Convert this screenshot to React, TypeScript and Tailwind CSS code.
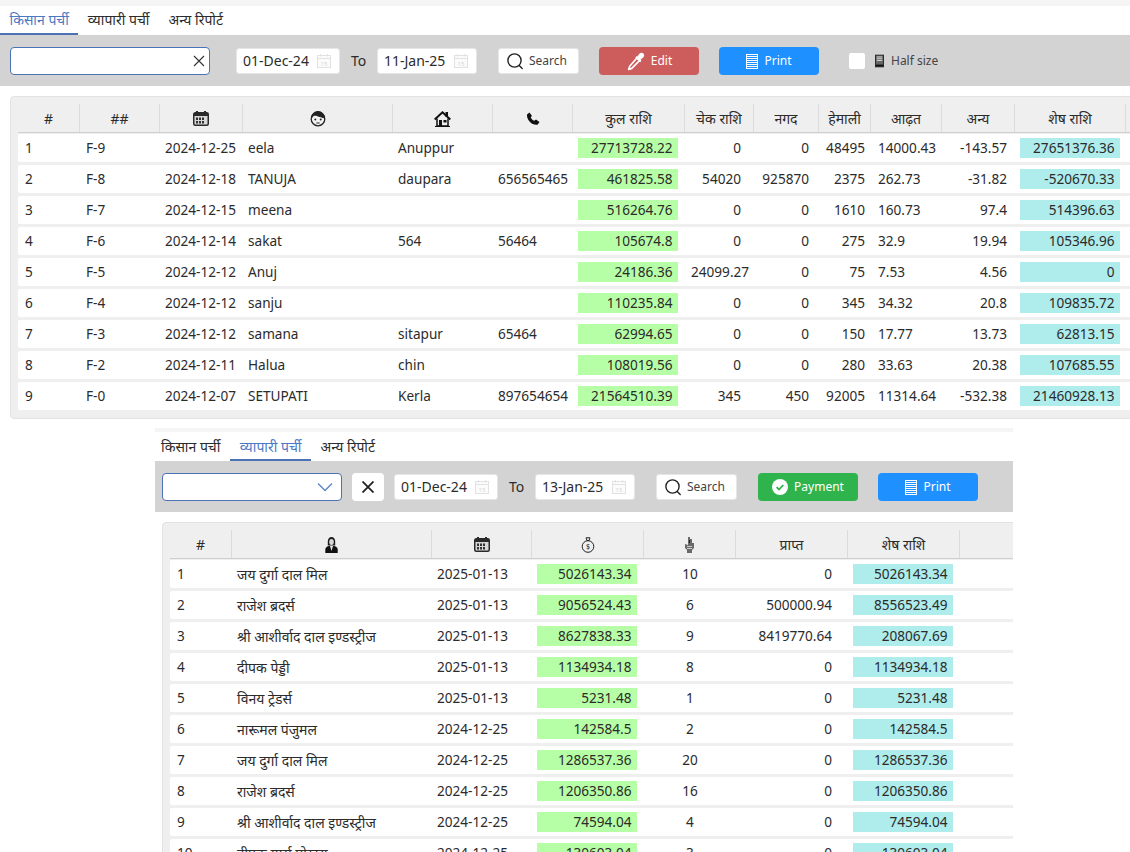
const font = "[font-family:'Noto_Sans','Open_Sans',sans-serif]";

const CalendarFaint = () => (
  <svg width="14" height="14" viewBox="0 0 14 14" fill="none" className="text-[#e2e2e2]">
    <rect x="0.5" y="1.5" width="13" height="12" stroke="currentColor" fill="#fbfbfb" />
    <path d="M0.5 4.5h13M3.5 0v2.5M10.5 0v2.5" stroke="currentColor" />
    <text x="7" y="11.5" fontSize="6" textAnchor="middle" fill="#d6d6d6">15</text>
  </svg>
);

const SearchIcon = () => (
  <svg width="18" height="18" viewBox="0 0 18 18" fill="none" stroke="#222" strokeWidth="1.4">
    <circle cx="8.5" cy="8.5" r="6.6" />
    <path d="M13.2 13.4l3 3" strokeLinecap="round" />
  </svg>
);

const PrintIcon = () => (
  <svg width="12" height="15" viewBox="0 0 12 15" fill="none" stroke="#fff" strokeWidth="1">
    <path d="M0.5 0.5v14M11.5 0.5v14M0 0.5h12M0 2.5h12M0 4.5h12M0 6.5h12M0 8.5h12M0 10.5h12M0 12.5h12M0 14.5h12" />
  </svg>
);

const DropperIcon = () => (
  <svg width="19" height="19" viewBox="0 0 18 18" fill="none" stroke="#fff" strokeWidth="1.6" strokeLinejoin="round">
    <path d="M10.5 5.5l2.5 2.5-7.5 7.5-3 1 1-3z" />
    <path d="M9.5 4.5l4.5 4.5" strokeWidth="2" />
    <path d="M11.5 4.5l2-2.5c.8-.8 1.8-.6 2.4 0s.7 1.6 0 2.3l-2.4 2.2z" fill="#fff" />
  </svg>
);

const CheckCircle = () => (
  <svg width="16" height="16" viewBox="0 0 16 16">
    <circle cx="8" cy="8" r="8" fill="#fff" />
    <path d="M4.6 8.2l2.4 2.3 4.3-4.5" fill="none" stroke="#2fb34d" strokeWidth="1.8" />
  </svg>
);

const BookIcon = () => (
  <svg width="9" height="14" viewBox="0 0 10 14">
    <rect x="0.5" y="0.5" width="9" height="13" fill="#666" stroke="#222" />
    <rect x="2" y="2" width="6" height="1" fill="#ddd" />
    <rect x="2" y="4" width="6" height="1" fill="#ddd" />
    <rect x="2" y="6" width="6" height="1" fill="#ddd" />
    <rect x="1" y="11" width="8" height="2" fill="#111" />
  </svg>
);

const CalendarDark = () => (
  <svg width="16" height="15" viewBox="0 0 16 15">
    <rect x="0.75" y="1.75" width="14.5" height="12.5" rx="1.5" fill="#d8d8d8" stroke="#2a2a2a" strokeWidth="1.5" />
    <rect x="1" y="2" width="14" height="3" fill="#2a2a2a" />
    <rect x="3" y="0" width="2" height="3" fill="#2a2a2a" />
    <rect x="11" y="0" width="2" height="3" fill="#2a2a2a" />
    <path d="M3 6.5h2V9H3zM6 6.5h2V9H6zM9 6.5h2V9H9zM3 10h2v2.500H3zM6 10h2v2.500H6zM9 10h2v2.500H9z" fill="#333" />
  </svg>
);

const FaceIcon = () => (
  <svg width="16" height="17" viewBox="0 0 16 17" fill="none" stroke="#222">
    <circle cx="8" cy="9" r="6.8" strokeWidth="1.3" fill="#f4f4f4" />
    <path d="M1.500 8c2-3.500 4-3 6.500-2s4.500 1 6.500 2c0-3.500-2.500-6.500-6.500-6.500S1.500 4.500 1.500 8z" fill="#222" />
    <circle cx="5.3" cy="9.5" r="1" fill="#222" stroke="none" />
    <circle cx="10.7" cy="9.5" r="1" fill="#222" stroke="none" />
    <path d="M6.3 13h3.400" />
  </svg>
);

const HouseIcon = () => (
  <svg width="17" height="16" viewBox="0 0 17 16" fill="none" stroke="#111">
    <rect x="11.5" y="1" width="2.5" height="5" fill="#111" stroke="none" />
    <path d="M0.7 8.500L8.500 1.300l7.800 7.200" strokeWidth="2" />
    <path d="M3 7.500V15h11V7.500" strokeWidth="1.5" />
    <path d="M1 15.500h15" strokeWidth="1.2" />
    <rect x="5" y="9" width="3" height="6" fill="#111" stroke="none" />
    <rect x="9.5" y="9" width="3" height="2.5" fill="#111" stroke="none" />
  </svg>
);

const PhoneIcon = () => (
  <svg width="14" height="14" viewBox="0 0 14 14">
    <path d="M1 2.500L3.500 0.500l2.500 3.500-1.300 1.300c.5 1.500 2 3 3.500 3.500L10 7.500l3.500 2.500-2 2.700C6 13.500.5 8 1 2.500z" fill="#111" />
  </svg>
);

const PersonSuit = () => (
  <svg width="13" height="16" viewBox="0 0 13 16">
    <path d="M2.800 4.500C2.800 1.800 4.300 0 6.500 0s3.700 1.800 3.700 4.500v4H2.800z" fill="#1c1c1c" />
    <ellipse cx="6.5" cy="5" rx="2.3" ry="2.9" fill="#d8d8d8" />
    <path d="M0.300 16v-3.500c0-2 2-3.500 4-3.500h4.400c2 0 4 1.500 4 3.500V16z" fill="#111" />
    <path d="M5 9h3l-1.500 5z" fill="#e8e8e8" />
  </svg>
);

const MoneyBag = () => (
  <svg width="14" height="16" viewBox="0 0 14 16" fill="none" stroke="#222">
    <path d="M5 0.800h4L8 3.500H6z" />
    <circle cx="7" cy="9.5" r="5.8" />
    <text x="7" y="12" fontSize="7" textAnchor="middle" fill="#222" stroke="none">$</text>
  </svg>
);

const HandIcon = () => (
  <svg width="11" height="16" viewBox="0 0 11 16">
    <path d="M4 0h2v2h2v4h2v5l-2 2v3H3v-3L1 11V7l3 1z" fill="#6a6a6a" />
    <path d="M3 9h5v1H3zM3 11h5v1H3z" fill="#cfcfcf" />
    <path d="M5 3h1v3H5z" fill="#222" />
  </svg>
);

const DateBox = ({ value, wide }: { value: string; wide?: boolean }) => (
  <div
    className={`flex h-[26px] items-center justify-between rounded-[3px] border border-[#e6e6e6] bg-white pl-[6px] pr-[8px] text-[14px] ${
      wide ? "w-[104px]" : "w-[100px]"
    }`}
  >
    <span>{value}</span>
    <CalendarFaint />
  </div>
);

const SearchButton = () => (
  <button className="flex h-[26px] w-[81px] items-center gap-[5px] rounded-[3px] border border-[#e6e6e6] bg-white pl-[7px] pt-[1px] text-[12px] text-[#444]">
    <SearchIcon />
    Search
  </button>
);

const ColorButton = ({ color, icon, label }: { color: string; icon: React.ReactNode; label: string }) => (
  <button className={`flex h-[28px] w-[100px] items-center justify-center gap-[6px] rounded-[4px] pt-[1px] text-[12px] text-white ${color}`}>
    {icon}
    {label}
  </button>
);

const Tabs = ({ active }: { active: number }) => {
  const names = ["किसान पर्ची", "व्यापारी पर्ची", "अन्य रिपोर्ट"];
  return (
    <div className="flex h-[29px] bg-white">
      {names.map((n, i) => (
        <div
          key={n}
          className={`flex items-center border-b-2 text-[14px] ${active === 1 ? "pt-[2px]" : ""} ${
            i === 0 && active === 1 ? "pl-[6px] pr-[10px]" : "px-[9.5px]"
          } ${i === active ? "border-[#4a72b4] text-[#4a78c4]" : "border-transparent"}`}
        >
          {n}
        </div>
      ))}
    </div>
  );
};

const gridA = "grid grid-cols-[62px_80px_83px_150px_100px_80px_112px_69px_65px_52px_71px_73px_111px]";
const gridB = "grid grid-cols-[62px_200px_100px_112px_92px_112px_112px_200px]";

const HeadCell = ({ children }: { children?: React.ReactNode }) => (
  <div className="flex h-[28px] items-center justify-center border-r border-[#dcdcdc] pt-[1px] text-[14px]">
    {children}
  </div>
);

const Amount = ({ value, color }: { value: string; color: string }) => (
  <div className={`ml-[5px] flex h-[20px] w-[100px] items-center justify-end pr-[5.5px] ${color}`}>{value}</div>
);

const farmers = [
  ["1", "F-9", "2024-12-25", "eela", "Anuppur", "", "27713728.22", "0", "0", "48495", "14000.43", "-143.57", "27651376.36"],
  ["2", "F-8", "2024-12-18", "TANUJA", "daupara", "656565465", "461825.58", "54020", "925870", "2375", "262.73", "-31.82", "-520670.33"],
  ["3", "F-7", "2024-12-15", "meena", "", "", "516264.76", "0", "0", "1610", "160.73", "97.4", "514396.63"],
  ["4", "F-6", "2024-12-14", "sakat", "564", "56464", "105674.8", "0", "0", "275", "32.9", "19.94", "105346.96"],
  ["5", "F-5", "2024-12-12", "Anuj", "", "", "24186.36", "24099.27", "0", "75", "7.53", "4.56", "0"],
  ["6", "F-4", "2024-12-12", "sanju", "", "", "110235.84", "0", "0", "345", "34.32", "20.8", "109835.72"],
  ["7", "F-3", "2024-12-12", "samana", "sitapur", "65464", "62994.65", "0", "0", "150", "17.77", "13.73", "62813.15"],
  ["8", "F-2", "2024-12-11", "Halua", "chin", "", "108019.56", "0", "0", "280", "33.63", "20.38", "107685.55"],
  ["9", "F-0", "2024-12-07", "SETUPATI", "Kerla", "897654654", "21564510.39", "345", "450", "92005", "11314.64", "-532.38", "21460928.13"],
];

const traders = [
  ["1", "जय दुर्गा दाल मिल", "2025-01-13", "5026143.34", "10", "0", "5026143.34"],
  ["2", "राजेश ब्रदर्स", "2025-01-13", "9056524.43", "6", "500000.94", "8556523.49"],
  ["3", "श्री आशीर्वाद दाल इण्डस्ट्रीज", "2025-01-13", "8627838.33", "9", "8419770.64", "208067.69"],
  ["4", "दीपक पेड्डी", "2025-01-13", "1134934.18", "8", "0", "1134934.18"],
  ["5", "विनय ट्रेडर्स", "2025-01-13", "5231.48", "1", "0", "5231.48"],
  ["6", "नारूमल पंजुमल", "2024-12-25", "142584.5", "2", "0", "142584.5"],
  ["7", "जय दुर्गा दाल मिल", "2024-12-25", "1286537.36", "20", "0", "1286537.36"],
  ["8", "राजेश ब्रदर्स", "2024-12-25", "1206350.86", "16", "0", "1206350.86"],
  ["9", "श्री आशीर्वाद दाल इण्डस्ट्रीज", "2024-12-25", "74594.04", "4", "0", "74594.04"],
  ["10", "दीपक गर्ग्स पोखरा", "2024-12-25", "130603.04", "3", "0", "130603.04"],
];

const App = () => {
  return (
    <div className={`h-[852px] w-[1130px] overflow-hidden bg-white text-[14px] text-[#2b2b2b] ${font}`}>
      {/* Farmer slips */}
      <div className="h-[6px] bg-[#f5f5f5]" />
      <Tabs active={0} />
      <div className="flex h-[51px] items-center bg-[#d3d3d3] pl-[10px]">
        <div className="flex h-[28px] w-[200px] items-center justify-end rounded-[4px] border border-[#4a72b4] bg-white pr-[3px]">
          <svg width="14" height="14" viewBox="0 0 14 14" stroke="#333" strokeWidth="1.1">
            <path d="M2 2l10 10M12 2L2 12" />
          </svg>
        </div>
        <div className="ml-[26px]"><DateBox value="01-Dec-24" wide /></div>
        <span className="ml-[11px] w-[26px]">To</span>
        <DateBox value="11-Jan-25" />
        <div className="ml-[21px]"><SearchButton /></div>
        <div className="ml-[20px]"><ColorButton color="bg-[#cd5c5c]" icon={<DropperIcon />} label="Edit" /></div>
        <div className="ml-[20px]"><ColorButton color="bg-[#1e90ff]" icon={<PrintIcon />} label="Print" /></div>
        <div className="ml-[30px] h-[16px] w-[16px] rounded-[2px] bg-white" />
        <div className="ml-[10px] flex items-center gap-[7px] pt-[1px] text-[12px] text-[#444]">
          <BookIcon />
          Half size
        </div>
      </div>
      <div className="mt-[10px] ml-[10px] h-[323px] w-[1125px] rounded-[4px] border border-[#e2e2e2] bg-[#efefef] pl-[7px] pt-[7px]">
        <div className={`${gridA} border-b border-[#cfcfcf]`}>
          <HeadCell>#</HeadCell>
          <HeadCell>##</HeadCell>
          <HeadCell><CalendarDark /></HeadCell>
          <HeadCell><FaceIcon /></HeadCell>
          <HeadCell><HouseIcon /></HeadCell>
          <HeadCell><PhoneIcon /></HeadCell>
          <HeadCell>कुल राशि</HeadCell>
          <HeadCell>चेक राशि</HeadCell>
          <HeadCell>नगद</HeadCell>
          <HeadCell>हेमाली</HeadCell>
          <HeadCell>आढ़त</HeadCell>
          <HeadCell>अन्य</HeadCell>
          <HeadCell>शेष राशि</HeadCell>
        </div>
        <div className="mt-[1px] flex flex-col gap-[3px] text-[13.6px]">
          {farmers.map((r) => (
            <div key={r[0]} className={`${gridA} h-[28px] items-center rounded-[2px] bg-white`}>
              <div className="pl-[7px]">{r[0]}</div>
              <div className="pl-[6px]">{r[1]}</div>
              <div className="pl-[5px]">{r[2]}</div>
              <div className="pl-[5px]">{r[3]}</div>
              <div className="pl-[5px]">{r[4]}</div>
              <div className="pl-[5px]">{r[5]}</div>
              <Amount value={r[6]} color="bg-[#b7ffa6]" />
              <div className="ml-[6px] w-[50px] whitespace-nowrap text-right">{r[7]}</div>
              <div className="pr-[10px] text-right">{r[8]}</div>
              <div className="pr-[6px] text-right">{r[9]}</div>
              <div className="pl-[7px]">{r[10]}</div>
              <div className="pr-[8px] text-right">{r[11]}</div>
              <Amount value={r[12]} color="bg-[#afecec]" />
            </div>
          ))}
        </div>
      </div>

      {/* Trader slips */}
      <div className="mt-[9px] ml-[155px] w-[858px] overflow-hidden">
        <div className="h-[4px] bg-[#f5f5f5]" />
        <Tabs active={1} />
        <div className="flex h-[51px] items-center bg-[#d3d3d3] pl-[7px]">
          <div className="flex h-[28px] w-[180px] items-center justify-end rounded-[4px] border border-[#4a72b4] bg-white pr-[8px]">
            <svg width="16" height="10" viewBox="0 0 16 10" fill="none" stroke="#5b84c4" strokeWidth="1.3">
              <path d="M1 1.5l7 7 7-7" />
            </svg>
          </div>
          <div className="ml-[10px] flex h-[28px] w-[32px] items-center justify-center rounded-[4px] bg-white">
            <svg width="12" height="12" viewBox="0 0 12 12" stroke="#222" strokeWidth="1.8">
              <path d="M0.5 0.5l11 11M11.5 0.5l-11 11" />
            </svg>
          </div>
          <div className="ml-[10px]"><DateBox value="01-Dec-24" wide /></div>
          <span className="ml-[11px] w-[26px]">To</span>
          <DateBox value="13-Jan-25" />
          <div className="ml-[21px]"><SearchButton /></div>
          <div className="ml-[21px]"><ColorButton color="bg-[#2fb34d]" icon={<CheckCircle />} label="Payment" /></div>
          <div className="ml-[20px]"><ColorButton color="bg-[#1e90ff]" icon={<PrintIcon />} label="Print" /></div>
        </div>
        <div className="mt-[10px] ml-[7px] w-[1000px] rounded-[4px] border border-[#e2e2e2] bg-[#efefef] pl-[7px] pt-[7px]">
          <div className={`${gridB} border-b border-[#cfcfcf]`}>
            <HeadCell>#</HeadCell>
            <HeadCell><PersonSuit /></HeadCell>
            <HeadCell><CalendarDark /></HeadCell>
            <HeadCell><MoneyBag /></HeadCell>
            <HeadCell><HandIcon /></HeadCell>
            <HeadCell>प्राप्त</HeadCell>
            <HeadCell>शेष राशि</HeadCell>
            <div />
          </div>
          <div className="mt-[1px] flex flex-col gap-[3px] text-[13.6px]">
            {traders.map((r) => (
              <div key={r[0]} className={`${gridB} h-[28px] items-center rounded-[2px] bg-white`}>
                <div className="pl-[7px]">{r[0]}</div>
                <div className="pl-[5px] text-[14px]">{r[1]}</div>
                <div className="pl-[5px]">{r[2]}</div>
                <Amount value={r[3]} color="bg-[#b7ffa6]" />
                <div className="text-center">{r[4]}</div>
                <div className="pr-[16px] text-right">{r[5]}</div>
                <Amount value={r[6]} color="bg-[#afecec]" />
                <div />
              </div>
            ))}
          </div>
        </div>
      </div>
    </div>
  );
};

export default App;
